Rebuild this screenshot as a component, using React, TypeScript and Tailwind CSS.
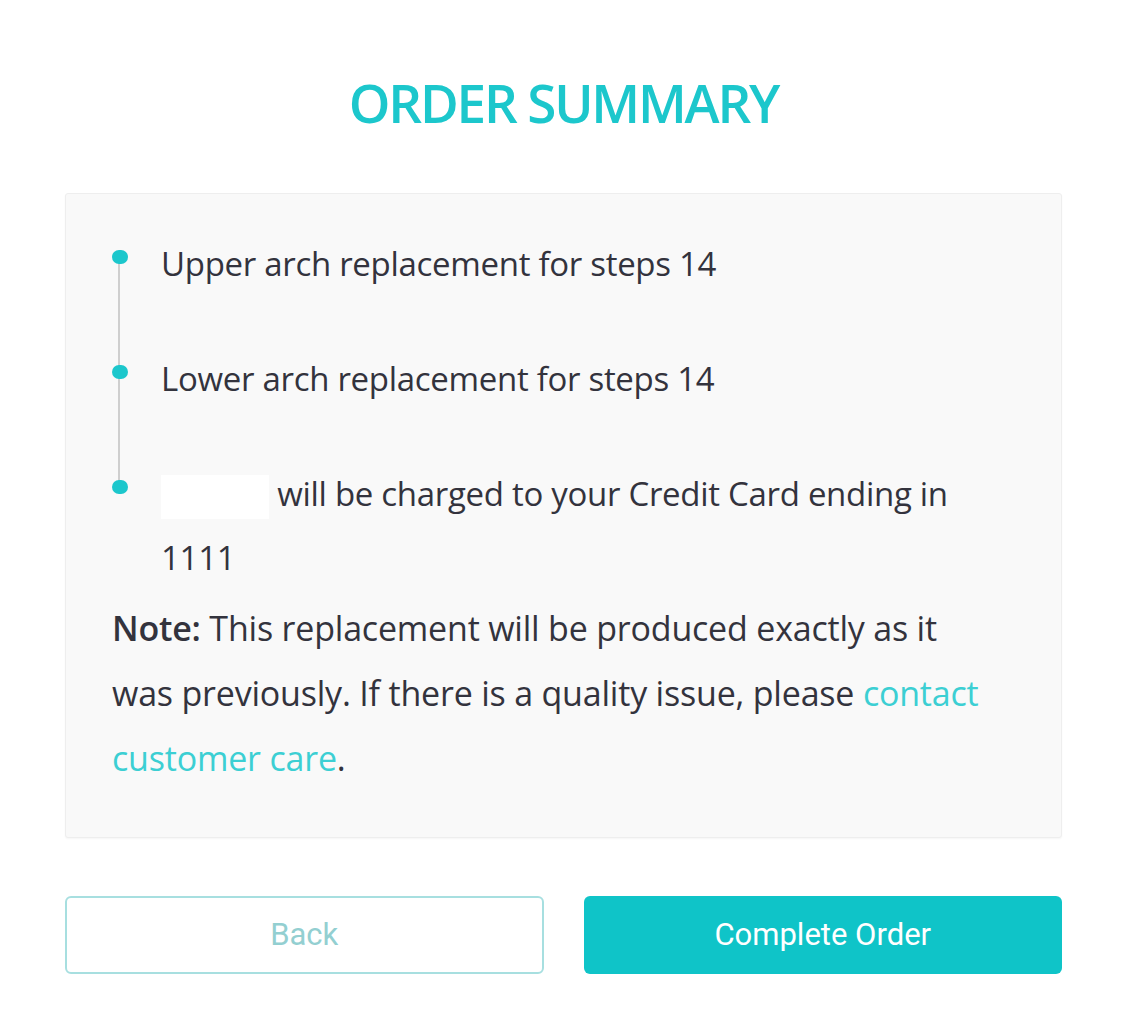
import React from 'react';

const body = { fontFamily: '"Open Sans", "Noto Sans", sans-serif' };
const btn = { fontFamily: 'Roboto, "Liberation Sans", sans-serif' };

interface Item {
  id: string;
  content: React.ReactNode;
}

const items: Item[] = [
  { id: 'upper', content: <>Upper arch replacement for steps 14</> },
  { id: 'lower', content: <>Lower arch replacement for steps 14</> },
  {
    id: 'charge',
    content: (
      <>
        <span className="inline-block h-[44px] w-[108px] bg-white align-middle" /> will be charged to your
        Credit Card ending in 1111
      </>
    ),
  },
];

export default function App() {
  return (
    <div className="min-h-[1034px] w-full bg-white" style={body}>
      <div className="ml-[65px] w-[997px] pt-[74px]">
        <h1 className="text-center text-[53px] font-semibold leading-[58px] tracking-[-2.2px] text-[#1cc7cc]">
          ORDER SUMMARY
        </h1>

        <div className="mt-[61px] rounded-[3px] border border-[#eeeeee] bg-[#f9f9f9] pb-[46px] pl-[46px] pr-[66px] pt-[38px] shadow-[0_1px_2px_rgba(0,0,0,0.04)]">
          <ul className="relative flex flex-col gap-[51px]">
            <span className="absolute left-[6px] top-[25px] h-[231px] w-[2px] bg-[#cfcfcf]" />
            {items.map((item) => (
              <li key={item.id} className="relative flex">
                <span className="absolute left-0 top-[18px] h-[14px] w-[16px] rounded-full bg-[#1cc7cc]" />
                <p className="pl-[49px] text-[33px] leading-[64px] tracking-[-0.3px] text-[#33333d]">
                  {item.content}
                </p>
              </li>
            ))}
          </ul>
          <p className="-mr-[30px] mt-[6px] text-[34px] leading-[65px] tracking-[-0.2px] text-[#33333d]">
            <span className="font-semibold">Note:</span> This replacement will be produced exactly as it
            <br />
            was previously. If there is a quality issue, please <a className="text-[#3ccfd3]">contact</a>
            <br />
            <a className="text-[#3ccfd3]">customer care</a>.
          </p>
        </div>

        <div className="mt-[58px] grid grid-cols-2 gap-[40px]">
          <button
            className="h-[78px] rounded-[6px] border-2 border-[#a7dfe0] bg-white text-[31px] text-[#93cfd1]"
            style={btn}
          >
            Back
          </button>
          <button
            className="h-[78px] rounded-[6px] bg-[#0fc4c8] text-[31px] text-white"
            style={btn}
          >
            Complete Order
          </button>
        </div>
      </div>
    </div>
  );
}
